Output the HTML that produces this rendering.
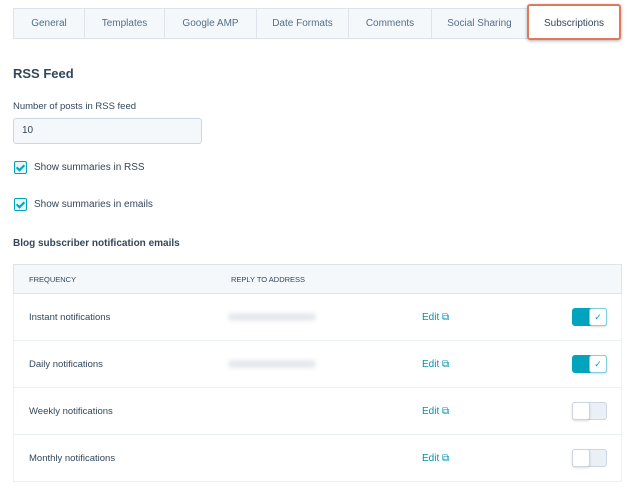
<!DOCTYPE html>
<html><head><meta charset="utf-8"><style>
*{box-sizing:border-box;margin:0;padding:0}
body{width:633px;height:490px;background:#fff;font-family:"Liberation Sans",sans-serif;color:#33475b;position:relative;overflow:hidden}
.abs{position:absolute}
.tabs{left:13px;top:8px;height:31px;width:608px;background:#f5f8fa;border:1px solid #dfe3eb}
.tab{position:absolute;top:0;height:29px;line-height:30px;text-align:center;font-size:10px;color:#516f90;border-right:1px solid #dfe3eb}
.sel{left:527px;top:4px;width:94px;height:36px;background:#fff;border:2px solid #e0785a;border-radius:3px;box-shadow:0 1px 3px rgba(0,0,0,.3);text-align:center;line-height:35px;font-size:10px;color:#33475b}
.cb{width:13px;height:13px;border:1.5px solid #00a4bd;border-radius:2px;background:#e5f5f8}
.cb:after{content:"";position:absolute;left:3px;top:0.5px;width:3px;height:6px;border:solid #00a4bd;border-width:0 2px 2px 0;transform:rotate(45deg)}
.row{left:13px;width:609px;height:47px;border:1px solid #eaf0f6;border-top:none;background:#fff}
.lbl{font-size:10px;color:#33475b}
.edit{font-size:10px;color:#0091ae}
.tg{width:35px;height:18px;border-radius:3px}
.on{background:#00a4bd}
.off{background:#eaf0f6;border:1px solid #cbd6e2}
.knob{position:absolute;top:0;width:18px;height:18px;background:#fff;border:1px solid #7fd1de;border-radius:3px;box-shadow:0 1px 2px rgba(0,0,0,.15)}
.blur{left:228px;width:88px;height:8px;background:#e5e8ec;filter:blur(2px);border-radius:4px}
</style></head><body>
<div class="abs tabs">
<div class="tab" style="left:0;width:71px">General</div>
<div class="tab" style="left:71px;width:80px">Templates</div>
<div class="tab" style="left:151px;width:92px">Google AMP</div>
<div class="tab" style="left:243px;width:92px">Date Formats</div>
<div class="tab" style="left:335px;width:83px">Comments</div>
<div class="tab" style="left:418px;width:95px;border-right:none">Social Sharing</div>
</div>
<div class="abs sel">Subscriptions</div>

<div class="abs" style="left:13px;top:66px;font-size:13px;font-weight:bold">RSS Feed</div>
<div class="abs lbl" style="left:13px;top:101px;font-size:9.5px">Number of posts in RSS feed</div>
<div class="abs" style="left:13px;top:118px;width:189px;height:26px;background:#f5f8fa;border:1px solid #cbd6e2;border-radius:3px;font-size:10px;line-height:24px;padding-left:8px">10</div>
<div class="abs cb" style="left:14px;top:161px"></div>
<div class="abs lbl" style="left:34px;top:162px">Show summaries in RSS</div>
<div class="abs cb" style="left:14px;top:198px"></div>
<div class="abs lbl" style="left:34px;top:199px">Show summaries in emails</div>
<div class="abs" style="left:13px;top:238px;font-size:10px;font-weight:bold">Blog subscriber notification emails</div>

<div class="abs" style="left:13px;top:264px;width:609px;height:30px;background:#f5f8fa;border:1px solid #dfe3eb"></div>
<div class="abs" style="left:29px;top:275px;font-size:7.5px;color:#33475b">FREQUENCY</div>
<div class="abs" style="left:231px;top:275px;font-size:7.5px;color:#33475b">REPLY TO ADDRESS</div>

<div class="abs row" style="top:294px"></div>
<div class="abs lbl" style="left:29px;top:312px;font-size:9.5px">Instant notifications</div>
<div class="abs blur" style="top:313px"></div>
<div class="abs edit" style="left:422px;top:312px">Edit ⧉</div>
<div class="abs tg on" style="left:572px;top:308px"><div class="knob" style="left:17px;font-size:9px;color:#00a4bd;text-align:center;line-height:16px">✓</div></div>

<div class="abs row" style="top:341px"></div>
<div class="abs lbl" style="left:29px;top:359px;font-size:9.5px">Daily notifications</div>
<div class="abs blur" style="top:360px"></div>
<div class="abs edit" style="left:422px;top:359px">Edit ⧉</div>
<div class="abs tg on" style="left:572px;top:355px"><div class="knob" style="left:17px;font-size:9px;color:#00a4bd;text-align:center;line-height:16px">✓</div></div>

<div class="abs row" style="top:388px"></div>
<div class="abs lbl" style="left:29px;top:406px;font-size:9.5px">Weekly notifications</div>
<div class="abs edit" style="left:422px;top:406px">Edit ⧉</div>
<div class="abs tg off" style="left:572px;top:402px"><div class="knob" style="left:-1px;top:-1px;border-color:#cbd6e2"></div></div>

<div class="abs row" style="top:435px"></div>
<div class="abs lbl" style="left:29px;top:453px;font-size:9.5px">Monthly notifications</div>
<div class="abs edit" style="left:422px;top:453px">Edit ⧉</div>
<div class="abs tg off" style="left:572px;top:449px"><div class="knob" style="left:-1px;top:-1px;border-color:#cbd6e2"></div></div>
</body></html>
